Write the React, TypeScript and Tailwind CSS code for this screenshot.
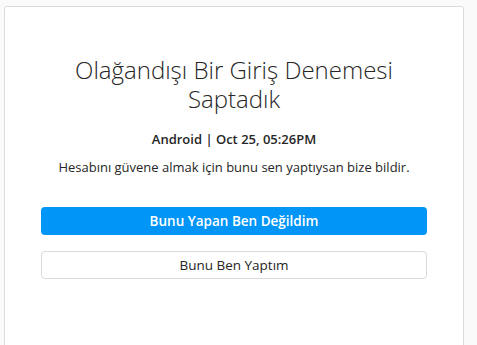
import React from "react";

export default function App() {
  return (
    <div
      className="h-[345px] w-[477px] bg-[#fafafa] pt-[6px] pl-[4px] overflow-hidden"
      style={{ fontFamily: '"Open Sans", "Noto Sans", sans-serif' }}
    >
      <div className="w-[460px] h-[400px] rounded-t-[3px] border border-[#dbdbdb] bg-white px-[36px] pt-[48px] flex flex-col items-center text-[#262626]">
        <h1 className="text-center text-[24px] leading-[29px] font-light px-[30px]">
          Olağandışı Bir Giriş Denemesi Saptadık
        </h1>
        <div className="mt-[17px] text-[13px] leading-[18px] font-semibold">
          Android | Oct 25, 05:26PM
        </div>
        <p className="mt-[10px] text-[13px] leading-[18px] text-center">
          Hesabını güvene almak için bunu sen yaptıysan bize bildir.
        </p>
        <button className="mt-[31px] w-full h-[28px] rounded-[4px] bg-[#0095f6] text-white text-[13.5px] font-semibold flex items-center justify-center">
          Bunu Yapan Ben Değildim
        </button>
        <button className="mt-[16px] w-full h-[28px] rounded-[4px] border border-[#dbdbdb] bg-white text-[#262626] text-[13.5px] flex items-center justify-center">
          Bunu Ben Yaptım
        </button>
      </div>
    </div>
  );
}
